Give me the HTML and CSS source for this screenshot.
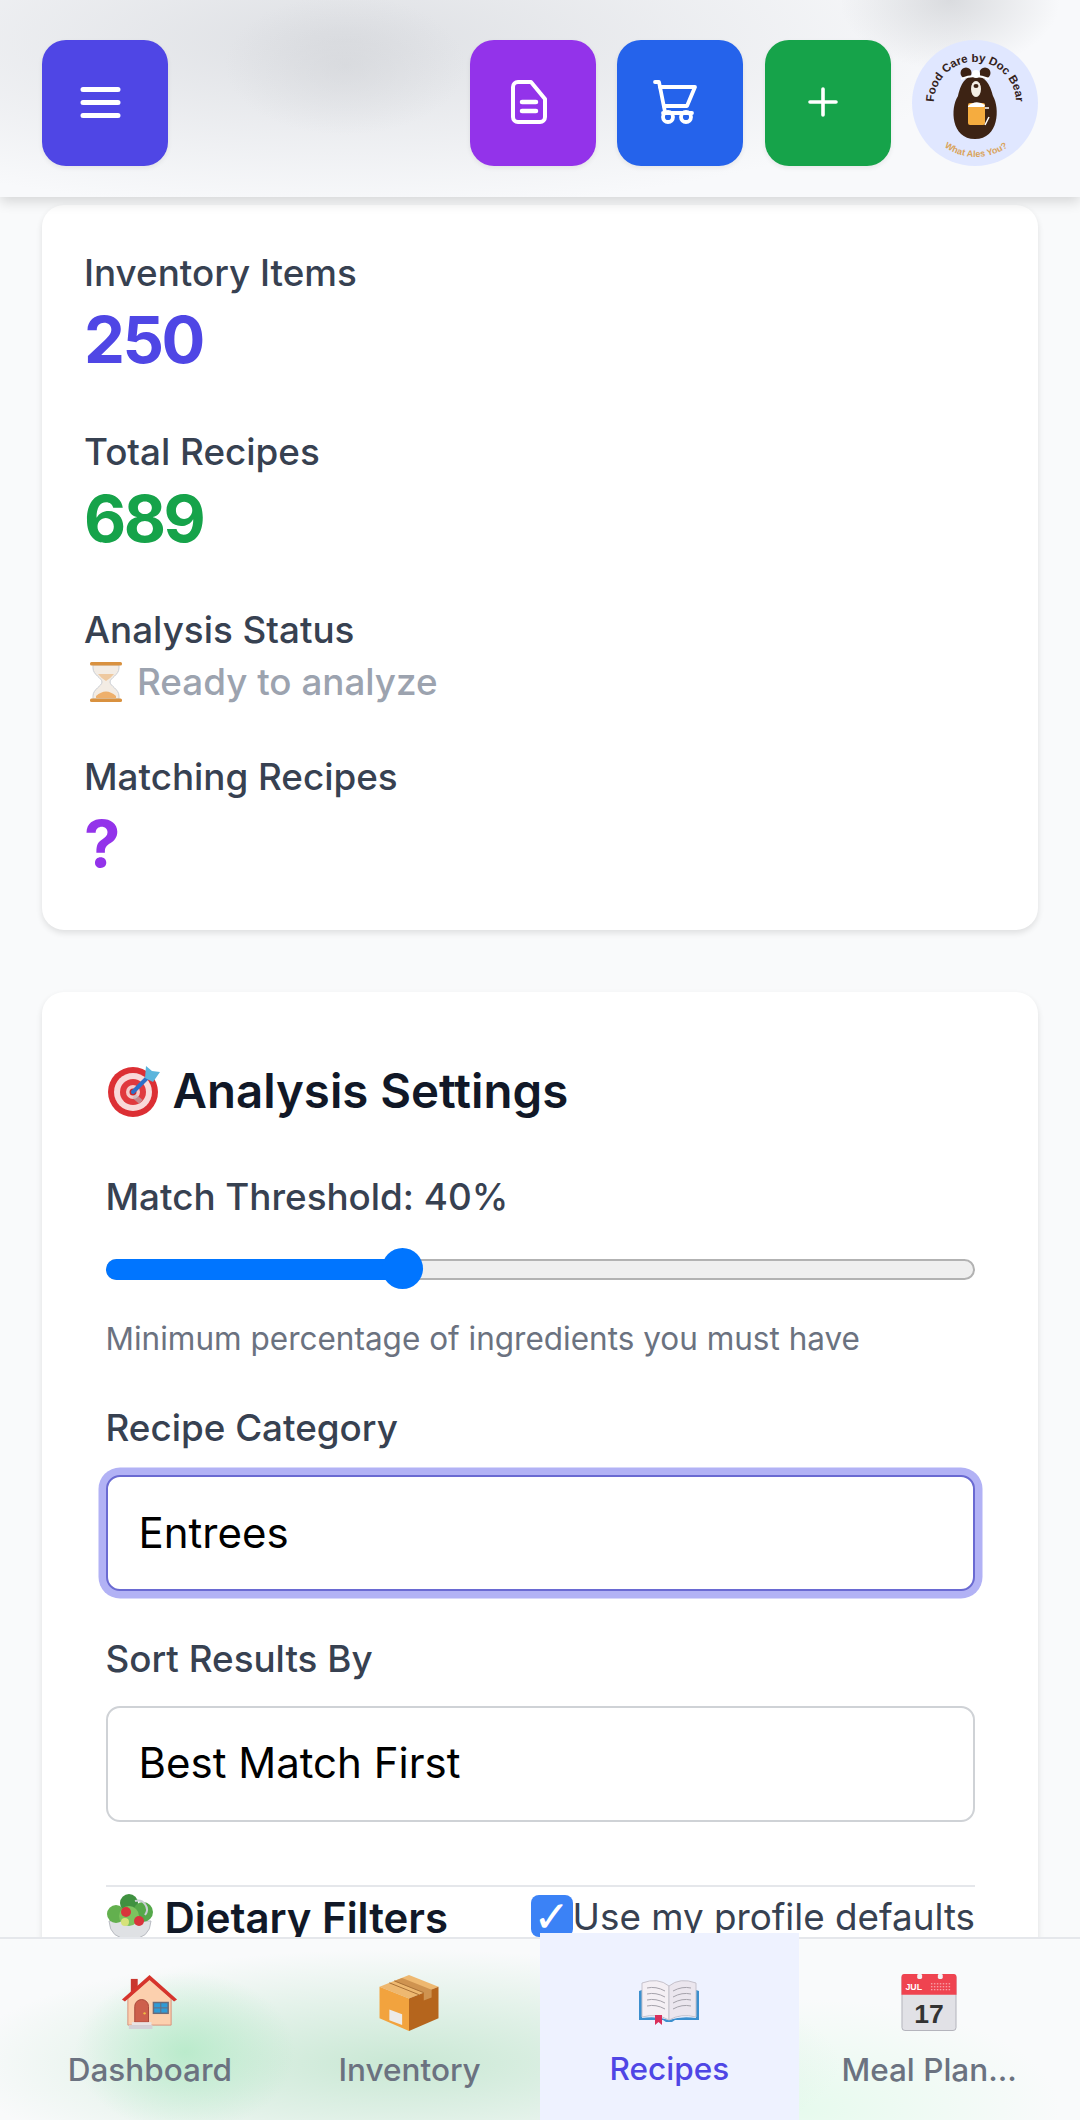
FILE: index.html
```html
<!DOCTYPE html>
<html lang="en">
<head>
    <meta charset="UTF-8">
    <meta name="viewport" content="width=device-width, initial-scale=1.0">
    <title>Recipes</title>
    <link rel="stylesheet" href="styles.css">
</head>
<body>
    <header class="topbar">
        <button class="tool-btn menu-btn">
            <svg width="41" height="31" viewBox="0 0 41 31" fill="none" stroke="#fff" stroke-width="5" stroke-linecap="round"><path d="M3 2.500h35M3 15.500h35M3 28.500h35"/></svg>
        </button>
        <div class="topbar-right">
            <button class="tool-btn doc-btn">
                <svg width="36" height="44" viewBox="0 0 36 44" fill="none" stroke="#fff" stroke-width="4" stroke-linejoin="round" stroke-linecap="round"><path d="M7 2h13l14 17v18a5 5 0 0 1-5 5H7a5 5 0 0 1-5-5V7a5 5 0 0 1 5-5z"/><path d="M11 22h14M11 31h14" stroke-width="4.500"/></svg>
            </button>
            <button class="tool-btn cart-btn">
                <svg width="44" height="44" viewBox="0 0 44 44" fill="none" stroke="#fff" stroke-width="3.800" stroke-linecap="round" stroke-linejoin="round"><path d="M2 2h4l6 30"/><path d="M7 7h35l-8 19H11"/><path d="M10 33h29"/><circle cx="15" cy="37" r="5"/><circle cx="33" cy="37" r="5"/></svg>
            </button>
            <button class="tool-btn add-btn">
                <svg width="30" height="30" viewBox="0 0 30 30" fill="none" stroke="#fff" stroke-width="3.600" stroke-linecap="round"><path d="M15 2v26M2 15h26"/></svg>
            </button>
            <svg class="logo" width="126" height="126" viewBox="0 0 126 126">
                <circle cx="63" cy="63" r="63" fill="#e0e7ff"/>
                <defs>
                    <path id="logoTop" d="M25 78A41 41 0 1 1 101 78"/>
                    <path id="logoBottom" d="M20 95A55 55 0 0 0 108 95"/>
                </defs>
                <text class="logo-top"><textPath href="#logoTop" startOffset="50%" text-anchor="middle">Food Care by Doc Bear</textPath></text>
                <text class="logo-bottom"><textPath href="#logoBottom" startOffset="50%" text-anchor="middle">What Ales You?</textPath></text>
                <circle cx="54" cy="33" r="5.500" fill="#3d2314"/>
                <circle cx="73" cy="33" r="5.500" fill="#3d2314"/>
                <path d="M63 36C51 36 48 48 46 56C38 68 39 99 63 99C87 99 88 68 81 56C79 48 75 36 63 36z" fill="#3d2314"/>
                <path d="M49 39q14-6 28 0" stroke="#fff" stroke-width="2" fill="none"/>
                <circle cx="64" cy="34" r="4" fill="#fff"/>
                <ellipse cx="64" cy="49" rx="5" ry="8" fill="#f4efe6"/>
                <ellipse cx="64" cy="46" rx="2.500" ry="2" fill="#3d2314"/>
                <rect x="56" y="63" width="17" height="22" rx="2" fill="#f5ac3f"/>
                <path d="M56 66q8-7 17-1l-1 2H56z" fill="#fff"/>
                <path d="M73 68h4M73 85l4-8" stroke="#fff" stroke-width="1.500" fill="none"/>
            </svg>
        </div>
    </header>

    <main class="content">
        <section class="card stats-card">
            <div class="stat">
                <div class="stat-label">Inventory Items</div>
                <div class="stat-value indigo">250</div>
            </div>
            <div class="stat">
                <div class="stat-label">Total Recipes</div>
                <div class="stat-value green">689</div>
            </div>
            <div class="stat">
                <div class="stat-label">Analysis Status</div>
                <div class="stat-status">
                    <svg width="32" height="40" viewBox="0 0 32 40">
                        <path d="M3 3h26v3c0 7-9 10-9 14s9 7 9 14v3H3v-3c0-7 9-10 9-14S3 13 3 6z" fill="#f3ece4" stroke="#c9cdd3" stroke-width="1"/>
                        <path d="M6 34q10-9 20 0v2H6z" fill="#eeb06c"/>
                        <path d="M8 12h16q-4 5-8 7q-4-2-8-7z" fill="#eec9a0"/>
                        <rect x="0" y="0" width="32" height="3.500" rx="1.500" fill="#d9913f"/>
                        <rect x="0" y="36.500" width="32" height="3.500" rx="1.500" fill="#d9913f"/>
                    </svg>
                    <span>Ready to analyze</span>
                </div>
            </div>
            <div class="stat">
                <div class="stat-label">Matching Recipes</div>
                <div class="stat-value purple">?</div>
            </div>
        </section>

        <section class="card settings-card">
            <h2 class="settings-title">
                <svg width="53" height="52" viewBox="0 0 53 52">
                    <circle cx="26" cy="27" r="25" fill="#dc2f34"/>
                    <circle cx="26" cy="27" r="19" fill="#f9d9d9"/>
                    <circle cx="26" cy="27" r="13" fill="#e0393e"/>
                    <circle cx="26" cy="27" r="7" fill="#f6c9c9"/>
                    <circle cx="26" cy="27" r="3.500" fill="#c9252b"/>
                    <path d="M27 31l7 6" stroke="#b8b8be" stroke-width="5" opacity="0.6"/>
                    <path d="M26 27L42 11" stroke="#2c6fc9" stroke-width="4" stroke-linecap="round"/>
                    <path d="M38 13l1-12 6 5 8 1-7 10z" fill="#5cb5dc"/>
                </svg>
                <span>Analysis Settings</span>
            </h2>

            <div class="field-label">Match Threshold: 40%</div>
            <div class="slider">
                <div class="slider-fill"></div>
                <div class="slider-thumb"></div>
            </div>
            <p class="hint">Minimum percentage of ingredients you must have</p>

            <div class="field-label category-label">Recipe Category</div>
            <div class="select select-focus">Entrees</div>

            <div class="field-label sort-label">Sort Results By</div>
            <div class="select sort-select">Best Match First</div>

            <div class="dietary-row">
                <h3 class="dietary-title">
                    <svg width="48" height="46" viewBox="0 0 48 46">
                        <path d="M3 27h42q-1 18-21 18T3 27z" fill="#dfe1e4" stroke="#b9bcc2"/>
                        <circle cx="10" cy="20" r="9" fill="#63b04e"/>
                        <circle cx="23" cy="9" r="9" fill="#3f9140"/>
                        <circle cx="37" cy="18" r="10" fill="#55a84a"/>
                        <circle cx="23" cy="22" r="10" fill="#7cc35f"/>
                        <circle cx="20" cy="18" r="5" fill="#d8343c"/>
                        <circle cx="33" cy="27" r="5" fill="#d8343c"/>
                        <circle cx="19" cy="28" r="4" fill="#d6e27a"/>
                        <path d="M29 7a9 9 0 0 1 10 14" stroke="#c9ced4" stroke-width="2" fill="none"/>
                    </svg>
                    <span>Dietary Filters</span>
                </h3>
                <label class="profile-check">
                    <span class="checkbox">&#10003;</span>
                    <span>Use my profile defaults</span>
                </label>
            </div>
        </section>
    </main>

    <nav class="bottom-nav">
        <a class="nav-item">
            <svg width="57" height="57" viewBox="0 0 58 58">
                <rect x="10" y="5" width="7" height="14" fill="#c9362f"/>
                <path d="M7 25L29 5l22 20v27H7z" fill="#fcd0ae" stroke="#d9907a"/>
                <path d="M1 26L29 1l28 25-3 2L29 6 4 28z" fill="#d6342c"/>
                <path d="M14 49V33a7 7 0 0 1 14 0v16z" fill="#cd5f4c" stroke="#a8483b"/>
                <circle cx="24" cy="40" r="1.200" fill="#f0c040"/>
                <rect x="33" y="29" width="15" height="11" fill="#2f9bd6" stroke="#6d6b78" stroke-width="1.500"/>
                <path d="M40.500 29v11M33 34.500h15" stroke="#6d6b78"/>
                <rect x="11" y="49" width="20" height="3" fill="#e8e3e3"/>
                <rect x="8" y="52" width="24" height="4" fill="#d3d1d6"/>
            </svg>
            <span>Dashboard</span>
        </a>
        <a class="nav-item">
            <svg width="61" height="57" viewBox="0 0 61 58">
                <path d="M30 1l30 12-30 12L0 13z" fill="#eeb870"/>
                <path d="M0 13l30 12v33L0 45z" fill="#f2a33e"/>
                <path d="M60 13L30 25v33l30-13z" fill="#b5651d"/>
                <path d="M15 7l30 12v8l8-3v-8L23 4z" fill="#cf9350"/>
                <path d="M15 7L45 19M10 9l30 12" stroke="#a87036" fill="none"/>
                <path d="M16 36l13 5v11l-13-5z" fill="#ecebe9" transform="translate(-6 0)"/>
            </svg>
            <span>Inventory</span>
        </a>
        <a class="nav-item active">
            <svg width="60" height="46" viewBox="0 0 60 46">
                <path d="M0 41V12l3-1v28q15-2 27 2 12-4 27-2V11l3 1v29H36l-3 2h-6l-3-2z" fill="#3b8fce"/>
                <path d="M3 38V4q16-6 27 3v34Q18 34 3 38z" fill="#f4eff4" stroke="#c5c2cc"/>
                <path d="M57 38V4q-16-6-27 3v34q12-7 27-3z" fill="#ebe6ee" stroke="#c5c2cc"/>
                <path d="M8 9q9-2 18 3M8 15q9-2 18 3M8 21q9-2 18 3M8 27q9-2 18 3M34 12q9-5 18-3M34 18q9-5 18-3M34 24q9-5 18-3M34 30q9-5 18-3" stroke="#a5a2ab" fill="none"/>
                <path d="M16 36h7v10l-3.500-3-3.500 3z" fill="#d92f5b"/>
            </svg>
            <span>Recipes</span>
        </a>
        <a class="nav-item">
            <svg width="56" height="57" viewBox="0 0 56 58">
                <rect x="0.500" y="0.500" width="55" height="57" rx="3" fill="#e1e1e6" stroke="#b3b3bb"/>
                <path d="M0 21V3a3 3 0 0 1 3-3h50a3 3 0 0 1 3 3v18z" fill="#ef4350"/>
                <rect x="16" y="0" width="5" height="5" rx="1.500" fill="#f3f3f5"/>
                <rect x="37" y="0" width="5" height="5" rx="1.500" fill="#f3f3f5"/>
                <text x="4" y="16" class="cal-month">JUL</text>
                <path d="M30 10h21M30 13h21M30 16h21" stroke="#f9c2c6" stroke-dasharray="1.500 1.500"/>
                <text x="28" y="50" class="cal-day" text-anchor="middle">17</text>
            </svg>
            <span>Meal Plan...</span>
        </a>
    </nav>
</body>
</html>
```

FILE: styles.css
```css
* {
    box-sizing: border-box;
}
html, body {
    margin: 0;
    height: 100%;
}
body {
    width: 1080px;
    height: 2120px;
    display: flex;
    flex-direction: column;
    overflow: hidden;
    font-family: Inter, "Liberation Sans", sans-serif;
    background-color: #f9fafb;
    color: #374151;
}

/* top bar */
.topbar {
    position: relative;
    z-index: 2;
    flex: none;
    height: 197px;
    display: flex;
    justify-content: space-between;
    padding: 40px 42px 0 42px;
    background-color: #f8f9fb;
    background-image:
        radial-gradient(ellipse 120px 70px at 345px 65px, rgba(208,210,214,0.5), rgba(208,210,214,0) 100%),
        radial-gradient(ellipse 110px 70px at 950px 0px, rgba(205,207,211,0.7), rgba(205,207,211,0) 100%),
        radial-gradient(ellipse 640px 170px at 340px 40px, rgba(222,224,228,1), rgba(222,224,228,0) 100%);
    box-shadow: 0 5px 12px rgba(0,0,0,0.14);
}
.topbar-right {
    display: flex;
    gap: 21.500px;
}
.tool-btn {
    width: 126px;
    height: 126px;
    border: none;
    border-radius: 24px;
    padding: 0 10px 2px 0;
    display: flex;
    align-items: center;
    justify-content: center;
    box-shadow: 0 2px 5px rgba(0,0,0,0.07);
}
.menu-btn {
    background-color: #4f46e5;
    padding-right: 9px;
}
.doc-btn {
    background-color: #9333ea;
    padding-right: 8px;
}
.cart-btn {
    background-color: #2563eb;
}
.add-btn {
    background-color: #16a34a;
}
.logo-top {
    font-family: "Liberation Sans", sans-serif;
    font-size: 11.500px;
    font-weight: bold;
    fill: #33211a;
}
.logo-bottom {
    font-family: "Liberation Sans", sans-serif;
    font-size: 9px;
    font-weight: bold;
    fill: #d9a35b;
}

/* page content */
.content {
    flex: 1;
    min-height: 0;
    overflow: hidden;
    padding: 8px 42px 0 42px;
}
.card {
    background-color: white;
    border-radius: 22px;
    box-shadow: 0 3px 6px rgba(0,0,0,0.11);
}
.stats-card {
    height: 725px;
    padding: 41px 42px 0 42px;
}
.stat {
    height: 178.500px;
}
.stat:nth-child(3) {
    height: 147px;
}
.stat-label {
    font-size: 36.800px;
    font-weight: 500;
    line-height: 54px;
}
.stat-value {
    font-size: 65px;
    font-weight: 700;
    letter-spacing: -2.500px;
    line-height: 79px;
}
.indigo {
    color: #4f46e5;
}
.green {
    color: #16a34a;
}
.purple {
    color: #9333ea;
}
.stat-status {
    display: flex;
    align-items: center;
    gap: 15px;
    padding-left: 6px;
    font-size: 36.800px;
    font-weight: 500;
    line-height: 50px;
    color: #9ca3af;
}
.settings-card {
    margin-top: 62px;
    height: 1100px;
    padding: 72px 63px 0 63.500px;
}
.settings-title {
    display: flex;
    align-items: center;
    gap: 13px;
    margin: 0 0 52px 1px;
    font-size: 47.400px;
    font-weight: 600;
    line-height: 54px;
    color: #111827;
}
.field-label {
    font-size: 36.800px;
    font-weight: 500;
    line-height: 54px;
}
.slider {
    position: relative;
    height: 21px;
    margin-top: 34.500px;
    background-color: #efefef;
    border: 2px solid #b2b2b2;
    border-radius: 11px;
}
.slider-fill {
    width: 296px;
    height: 21px;
    margin: -2px;
    background-color: #0075ff;
    border-radius: 11px;
}
.slider-thumb {
    position: absolute;
    left: 274px;
    top: -12.500px;
    width: 41px;
    height: 41px;
    background-color: #0075ff;
    border-radius: 50%;
}
.hint {
    margin: 35px 0 0 0;
    font-size: 31.500px;
    line-height: 47px;
    color: #6b7280;
}
.category-label {
    margin-top: 39px;
}
.sort-label {
    margin-top: 41px;
}
.select {
    height: 116px;
    margin-top: 20.500px;
    padding: 0 0 2px 31px;
    display: flex;
    align-items: center;
    font-size: 42px;
    color: #000;
    background-color: white;
    border: 2px solid #cfd2d6;
    border-radius: 14px;
}
.sort-select {
    margin-top: 19.500px;
}
.select-focus {
    border-color: #6a6ad2;
    box-shadow: 0 0 0 7.500px #b2b2f5;
}
.dietary-row {
    display: flex;
    justify-content: space-between;
    align-items: flex-start;
    margin-top: 63px;
    padding-top: 7px;
    border-top: 2px solid #e5e7eb;
}
.dietary-title {
    display: flex;
    align-items: center;
    gap: 11px;
    margin: -2px 0 0 0;
    font-size: 41.900px;
    font-weight: 600;
    color: #111827;
}
.profile-check {
    display: flex;
    align-items: center;
    font-size: 36.800px;
}
.checkbox {
    width: 42px;
    height: 42px;
    display: flex;
    align-items: center;
    justify-content: center;
    background-color: #3b82f6;
    border-radius: 8px;
    color: white;
    font-family: "DejaVu Sans", sans-serif;
    font-size: 44px;
    font-weight: bold;
}

/* bottom nav */
.bottom-nav {
    position: relative;
    z-index: 2;
    flex: none;
    height: 183px;
    padding: 0 21px 0 20px;
    display: grid;
    grid-template-columns: repeat(4, 1fr);
    border-top: 2px solid #e5e7eb;
    background-color: #f9fafb;
    background-image:
        radial-gradient(ellipse 110px 80px at 185px 113px, rgba(170,232,192,0.7), rgba(170,232,192,0) 100%),
        radial-gradient(ellipse 440px 115px at 400px 125px, rgba(196,230,208,0.9), rgba(196,230,208,0) 100%),
        radial-gradient(ellipse 260px 110px at 800px 170px, rgba(226,250,234,0.8), rgba(226,250,234,0) 100%);
}
.nav-item {
    display: flex;
    flex-direction: column;
    align-items: center;
    padding-top: 35px;
    font-size: 31.500px;
    font-weight: 500;
    color: #6b7280;
}
.nav-item svg {
    flex: none;
}
.nav-item span {
    margin-top: 15px;
    line-height: 47px;
}
.nav-item.active {
    margin-top: -6px;
    padding-top: 46px;
    background-color: #eef2ff;
    color: #4f46e5;
}
.nav-item.active span {
    margin-top: 20px;
}
.cal-month {
    font-family: "Liberation Sans", sans-serif;
    font-size: 9px;
    font-weight: bold;
    fill: #fff;
}
.cal-day {
    font-family: "Liberation Sans", sans-serif;
    font-size: 27px;
    font-weight: bold;
    fill: #333;
}
```
